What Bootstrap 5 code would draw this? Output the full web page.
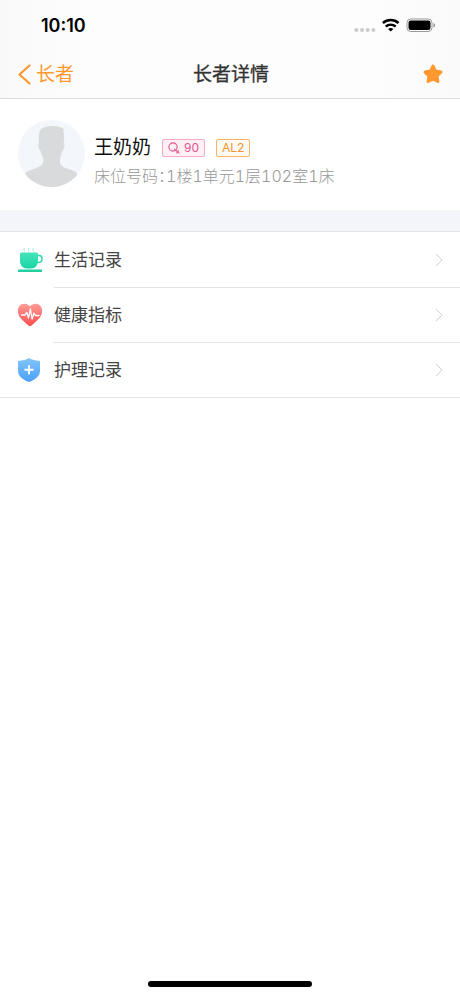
<!DOCTYPE html>
<html lang="zh-CN">
<head>
<meta charset="utf-8">
<meta name="viewport" content="width=device-width, initial-scale=1">
<title>长者详情</title>
<link rel="stylesheet" href="https://cdn.jsdelivr.net/npm/bootstrap@5.3.0/dist/css/bootstrap.min.css">
<style>
  :root { --accent: #ff982f; --ink: #333; --line: #e3e3e5; }
  body { font-family: Inter, "Noto Sans CJK SC", sans-serif; color: var(--ink); background: #fff; }
  svg { display: block; flex: none; }
  a { color: inherit; text-decoration: none; }
  .top-area { background: linear-gradient(90deg, #f9f9f9, #fdfdfd 20%, #fdfdfd 80%, #fafafa); border-bottom: 1px solid #dedede; }
  .status-bar { height: 52px; padding: 0 24px 0 41px; color: #000; }
  .clock { font-size: 18px; line-height: 24px; font-weight: 600; }
  .title-bar { display: grid; grid-template-columns: 1fr auto 1fr; height: 46px; padding: 0 16px 0 18px; }
  .back-link { color: var(--accent); font-size: 19px; line-height: 24px; gap: 5px; }
  .page-title { font-size: 19px; line-height: 24px; font-weight: 400; -webkit-text-stroke: .3px; }
  .profile { height: 111px; padding: 0 18px 2px; gap: 9px; }
  .profile-text { padding-top: 16px; }
  .person { font-size: 19px; line-height: 28px; color: #111; }
  .name-line { gap: 11px; }
  .tag { height: 18px; font-size: 12px; line-height: 16px; border: 1px solid; border-radius: 2px; padding: 0 5px; gap: 4px; }
  .tag-pink { color: #e65391; border-color: #f9a9c6; background: #fff0f4; }
  .tag-orange { color: #f5922f; border-color: #fbb263; background: #fffaf2; }
  .bed { font-size: 16px; line-height: 26px; color: #999; font-weight: 300; font-variant-numeric: tabular-nums; }
  .half-width { font-family: "Noto Sans CJK SC", sans-serif; font-feature-settings: "halt"; }
  .divider-band { height: 22px; background: #f4f5fb; border-bottom: 1px solid var(--line); }
  .menu { border-bottom: 1px solid var(--line); }
  .menu-link { padding-left: 17px; gap: 10px; }
  .menu-text { height: 55px; padding-right: 17px; font-size: 17px; line-height: 24px; color: #444; }
  .menu li + li .menu-text { border-top: 1px solid var(--line); }
  .home-bar { width: 164px; height: 6px; border-radius: 3px; background: #000; margin-bottom: 9px; }
</style>
<script defer src="https://cdn.jsdelivr.net/npm/bootstrap@5.3.0/dist/js/bootstrap.bundle.min.js"></script>
</head>
<body>
<div class="d-flex flex-column min-vh-100">
  <header class="top-area">
    <div class="status-bar d-flex align-items-center justify-content-between">
      <span class="clock">10:10</span>
      <svg width="82" height="18" viewBox="0 0 82 18" aria-hidden="true">
        <g fill="#cbcbcb"><circle cx="2.3" cy="13" r="2"/><circle cx="8" cy="13" r="2"/><circle cx="13.7" cy="13" r="2"/><circle cx="19.4" cy="13" r="2"/></g>
        <g fill="none" stroke="#000" stroke-width="2.5"><path d="M28.900 6a12 12 0 0 1 15.600 0"/><path d="M31.700 9.500a8 8 0 0 1 10 0"/></g>
        <path d="M34 12a4.300 4.300 0 0 1 5.400 0l-2.700 2.600z"/>
        <rect x="53" y="2" width="25" height="12.500" rx="3.8" fill="none" stroke="#999"/>
        <rect x="54.500" y="3.500" width="22" height="9.500" rx="2.3"/>
        <path d="M79.500 6.200c2 .5 2 3.600 0 4.200z" fill="#888"/>
      </svg>
    </div>
    <nav class="title-bar align-items-center">
      <a href="#" class="back-link d-flex align-items-center">
        <svg width="13" height="22" viewBox="0 0 13 22" fill="none" stroke="currentColor" stroke-width="2.2" stroke-linecap="round" stroke-linejoin="round" aria-hidden="true"><path d="M11.500 1.500 1.500 10.500l10 9"/></svg>
        <span>长者</span>
      </a>
      <h1 class="page-title m-0">长者详情</h1>
      <button type="button" class="btn p-0 border-0 ms-auto" aria-label="收藏">
        <svg width="22" height="22" viewBox="0 0 22 22" fill="#ff982f" stroke="#ff982f" stroke-width="3.200" stroke-linejoin="round"><path d="m11 2.200 2.400 5 5.500.8-4 3.900.9 5.500-4.800-2.600-4.800 2.600.9-5.500-4-3.900 5.500-.8z"/></svg>
      </button>
    </nav>
  </header>
  <main>
    <section class="profile d-flex align-items-center">
      <svg width="67" height="67" viewBox="0 0 67 67" role="img" aria-label="头像">
        <defs><clipPath id="face"><circle cx="33.500" cy="33.500" r="33.500"/></clipPath></defs>
        <g clip-path="url(#face)">
          <path d="M0 0h67v67H0z" fill="#f3f6fb"/>
          <path d="M21 23c-1-9 0-14 6-16 6-1.500 12-1 16 .5 1.500.3 2.500 1 3 2.200l-1 1.300c1.500 3 1.500 8 .5 12 1.800.5 1.200 5-1 8-.8 1.700-1.200 3-2 5.500-.7 3-1 6.500.5 8.500 3.500 3.500 9 4 13 6 3 1.500 4.500 4 5 8v9H5v-9c1-4 2-6.500 5.500-8 5-2 10.500-3.500 13.500-6.500 2-2.500 1.500-6 .5-8.500-1-1.500-1.500-3.500-2-5-2.200-2-2.800-6.500-1.500-8z" fill="#d9dadb"/>
        </g>
      </svg>
      <div class="profile-text">
        <div class="name-line d-flex align-items-center">
          <h2 class="person fw-normal m-0">王奶奶</h2>
          <span class="tag tag-pink d-inline-flex align-items-center">
            <svg width="12" height="12" viewBox="0 0 12 12" fill="none" stroke="currentColor" stroke-width="1.100" stroke-linecap="round" aria-hidden="true"><circle cx="5" cy="5" r="4.100"/><path d="m6.500 7.200 4.500 3.900M8.700 11l1.700-2.300"/></svg>90</span>
          <span class="tag tag-orange d-inline-flex align-items-center">AL2</span>
        </div>
        <div class="bed">床位号码<span class="half-width">：</span>1楼1单元1层102室1床</div>
      </div>
    </section>
    <div class="divider-band"></div>
    <ul class="menu list-unstyled m-0">
      <li><a href="#" class="menu-link d-flex align-items-center">
        <svg width="27" height="26" viewBox="0 0 27 26" aria-hidden="true">
          <defs><linearGradient id="mint" x2="0" y2="1"><stop stop-color="#46e4bb"/><stop offset="1" stop-color="#18d6a5"/></linearGradient></defs>
          <path d="M3 7q0-1.500 1.500-1.500h15Q21 5.500 21 7v6.500c0 5-3 8-7 8h-4c-4 0-7-3-7-8z" fill="url(#mint)"/>
          <path d="M20 8.500h2c2 0 3 1 3 3s-1.300 4-4 4h-1.500" fill="none" stroke="#28dbae" stroke-width="1.500"/>
          <path d="M7.500 1q-1.200 1.200 0 3.500M12 1q-1.200 1.200 0 3.500M16.500 1q-1.200 1.200 0 3.500" fill="none" stroke="#9eeeda"/>
          <rect x="1" y="22.500" width="24" height="2.500" rx=".6" fill="#22cfa1"/>
        </svg>
        <span class="menu-text d-flex flex-grow-1 align-items-center justify-content-between">生活记录
          <svg width="8" height="14" viewBox="0 0 8 14" fill="none" stroke="#d0d0d3" aria-hidden="true"><path d="m1 1 6 6-6 6"/></svg></span>
      </a></li>
      <li><a href="#" class="menu-link d-flex align-items-center">
        <svg width="27" height="26" viewBox="0 0 27 26" aria-hidden="true">
          <defs><linearGradient id="coral" x2="0" y2="1"><stop stop-color="#ff9d98"/><stop offset="1" stop-color="#fb4e50"/></linearGradient></defs>
          <path d="M13 4.500C10.500 1 5 .6 2.500 4c-3 4-1.500 9 1.500 12.500 2.500 2.800 5 5 7.500 6.900q1.500 1.100 3 0c2.500-1.900 5-4.100 7.500-6.900 3-3.500 4.500-8.500 1.500-12.500C21 .6 15.500 1 13 4.500z" fill="url(#coral)"/>
          <path d="M4.500 13H8l1.800-2.500 1.700 5.500L13.400 7l1.700 10 1.800-6 1.500 2.500h3.600" fill="none" stroke="#fff" stroke-width="1.300" stroke-linecap="round" stroke-linejoin="round"/>
        </svg>
        <span class="menu-text d-flex flex-grow-1 align-items-center justify-content-between">健康指标
          <svg width="8" height="14" viewBox="0 0 8 14" fill="none" stroke="#d0d0d3" aria-hidden="true"><path d="m1 1 6 6-6 6"/></svg></span>
      </a></li>
      <li><a href="#" class="menu-link d-flex align-items-center">
        <svg width="27" height="26" viewBox="0 0 27 26" aria-hidden="true">
          <defs><linearGradient id="azure" x2="0" y2="1"><stop stop-color="#82c5fc"/><stop offset="1" stop-color="#4ba0f8"/></linearGradient></defs>
          <path d="M12 1c3 1.800 6.500 2.600 10 2.700q1 .1 1 1.200v9c0 5-5 8.500-9.500 10.500q-1.500.7-3 0C6 22.400 1 18.900 1 13.900v-9q0-1.100 1-1.200C5.500 3.600 9 2.800 12 1z" fill="url(#azure)"/>
          <path d="M12 8.300v9M7.500 12.800h9" stroke="#fff" stroke-width="2"/>
        </svg>
        <span class="menu-text d-flex flex-grow-1 align-items-center justify-content-between">护理记录
          <svg width="8" height="14" viewBox="0 0 8 14" fill="none" stroke="#d0d0d3" aria-hidden="true"><path d="m1 1 6 6-6 6"/></svg></span>
      </a></li>
    </ul>
  </main>
  <div class="home-bar mt-auto mx-auto"></div>
</div>
</body>
</html>
